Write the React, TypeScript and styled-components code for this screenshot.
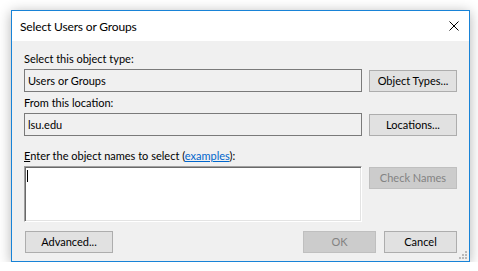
import styled, { createGlobalStyle } from "styled-components";

const GlobalStyle = createGlobalStyle`
  html, body {
    margin: 0;
    background: #ffffff;
  }
  body {
    font-family: Lato, "Liberation Sans", Arial, sans-serif;
    font-size: 11px;
    color: #000000;
  }
`;

const CloseIcon = () => (
  <svg width="10" height="10" viewBox="0 0 10 10">
    <path d="M0.5 0.5 L9.5 9.5 M9.5 0.5 L0.5 9.5" stroke="#000" strokeWidth="1" fill="none" />
  </svg>
);

const GripIcon = () => (
  <svg width="8" height="8" viewBox="0 0 8 8">
    <rect x="6" y="0" width="2" height="2" fill="#b8b8b8" />
    <rect x="3" y="3" width="2" height="2" fill="#b8b8b8" />
    <rect x="6" y="3" width="2" height="2" fill="#b8b8b8" />
    <rect x="0" y="6" width="2" height="2" fill="#b8b8b8" />
    <rect x="3" y="6" width="2" height="2" fill="#b8b8b8" />
    <rect x="6" y="6" width="2" height="2" fill="#b8b8b8" />
  </svg>
);

const App = () => {
  return (
    <>
      <GlobalStyle />
      <Screen>
        <DialogWindow>
          <TitleBar>
            <Title>Select Users or Groups</Title>
            <CloseIcon />
          </TitleBar>
          <DialogBody>
            <FieldLabel>Select this object type:</FieldLabel>
            <FieldRow>
              <ReadOnlyField>Users or Groups</ReadOnlyField>
              <DialogButton width={88}>Object Types...</DialogButton>
            </FieldRow>

            <FieldLabel top={3}>From this location:</FieldLabel>
            <FieldRow>
              <ReadOnlyField>lsu.edu</ReadOnlyField>
              <DialogButton width={88}>Locations...</DialogButton>
            </FieldRow>

            <FieldLabel top={12}>
              <Accel>E</Accel>nter the object names to select (<HelpLink>examples</HelpLink>):
            </FieldLabel>
            <FieldRow>
              <NamesBox>
                <Caret />
              </NamesBox>
              <DialogButton width={88} disabled>
                Check Names
              </DialogButton>
            </FieldRow>

            <Footer>
              <DialogButton width={88}>Advanced...</DialogButton>
              <Spacer />
              <DialogButton width={73} disabled>
                OK
              </DialogButton>
              <DialogButton width={73}>Cancel</DialogButton>
            </Footer>
          </DialogBody>
          <Grip>
            <GripIcon />
          </Grip>
        </DialogWindow>
      </Screen>
    </>
  );
};

const Screen = styled.div`
  padding: 10px 0 0 11px;
`;

const DialogWindow = styled.div`
  position: relative;
  box-sizing: border-box;
  width: 459px;
  height: 252px;
  border: 1px solid #1883d7;
  background: #f0f0f0;
  box-shadow: 0 2px 12px rgba(0, 0, 0, 0.3);
  display: flex;
  flex-direction: column;
`;

const TitleBar = styled.div`
  height: 30px;
  flex: none;
  background: #ffffff;
  display: flex;
  align-items: center;
  justify-content: space-between;
  padding: 0 10px 0 8px;
`;

const Title = styled.span`
  font-size: 12px;
  line-height: 15px;
  letter-spacing: -0.15px;
`;

const DialogBody = styled.div`
  flex: 1;
  display: flex;
  flex-direction: column;
  padding: 10px 12px 8px 12px;
`;

const FieldLabel = styled.div<{ top?: number }>`
  line-height: 15px;
  margin-top: ${(p) => p.top ?? 0}px;
  margin-bottom: 3px;
  white-space: nowrap;
`;

const Accel = styled.span`
  text-decoration: underline;
`;

const HelpLink = styled.span`
  color: #0066cc;
  text-decoration: underline;
`;

const FieldRow = styled.div`
  display: grid;
  grid-template-columns: 338px 88px;
  column-gap: 7px;
  align-items: start;
`;

const ReadOnlyField = styled.div`
  box-sizing: border-box;
  height: 23px;
  border: 1px solid #7a7a7a;
  background: #f0f0f0;
  padding: 0 3px;
  line-height: 21px;
`;

const NamesBox = styled.div`
  box-sizing: border-box;
  height: 56px;
  border: 1px solid;
  border-color: #a0a0a0 #ffffff #ffffff #a0a0a0;
  box-shadow: inset 1px 1px 0 #696969, inset -1px -1px 0 #e3e3e3;
  background: #ffffff;
  padding: 3px 0 0 2px;
`;

const Caret = styled.div`
  width: 1px;
  height: 12px;
  background: #000000;
`;

const DialogButton = styled.button<{ width: number }>`
  box-sizing: border-box;
  width: ${(p) => p.width}px;
  height: 22px;
  margin-top: 1px;
  padding: 0;
  border: 1px solid #adadad;
  background: #e1e1e1;
  color: #000000;
  font-family: inherit;
  font-size: 11px;
  line-height: 20px;
  text-align: center;

  &:disabled {
    border-color: #bfbfbf;
    background: #cccccc;
    color: #838383;
  }
`;

const Footer = styled.div`
  margin-top: auto;
  display: flex;
  gap: 8px;
  padding-left: 1px;
`;

const Spacer = styled.div`
  flex: 1;
`;

const Grip = styled.div`
  position: absolute;
  right: 2px;
  bottom: 2px;
  width: 8px;
  height: 8px;
  line-height: 0;
`;

export default App;
